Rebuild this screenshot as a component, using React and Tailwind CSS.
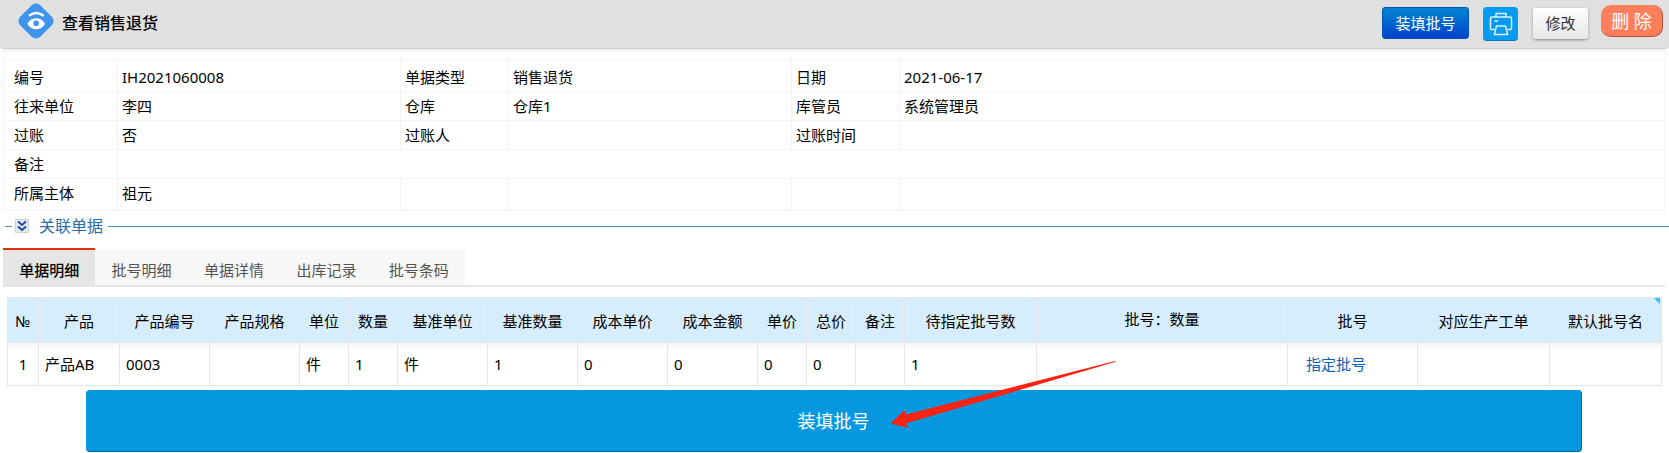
import { useState } from "react";

const INFO_ROWS = [
  ["编号", "IH2021060008", "单据类型", "销售退货", "日期", "2021-06-17"],
  ["往来单位", "李四", "仓库", "仓库1", "库管员", "系统管理员"],
  ["过账", "否", "过账人", "", "过账时间", ""],
  ["备注", ""],
  ["所属主体", "祖元", "", "", "", ""],
];

const TABS = ["单据明细", "批号明细", "单据详情", "出库记录", "批号条码"];

const COLUMNS = [
  { title: "№", width: "w-[31px]", value: "1", center: true },
  { title: "产品", width: "w-[81px]", value: "产品AB" },
  { title: "产品编号", width: "w-[90px]", value: "0003" },
  { title: "产品规格", width: "w-[90px]", value: "" },
  { title: "单位", width: "w-[49px]", value: "件" },
  { title: "数量", width: "w-[49px]", value: "1" },
  { title: "基准单位", width: "w-[90px]", value: "件" },
  { title: "基准数量", width: "w-[90px]", value: "1" },
  { title: "成本单价", width: "w-[90px]", value: "0" },
  { title: "成本金额", width: "w-[90px]", value: "0" },
  { title: "单价", width: "w-[49px]", value: "0" },
  { title: "总价", width: "w-[49px]", value: "0" },
  { title: "备注", width: "w-[49px]", value: "" },
  { title: "待指定批号数", width: "w-[132px]", value: "1" },
  { title: "批号：数量", width: "w-[251px]", value: "", raised: true },
  { title: "批号", width: "w-[130px]", value: "指定批号", link: true },
  { title: "对应生产工单", width: "w-[132px]", value: "" },
  { title: "默认批号名", width: "w-[112px]", value: "", corner: true },
];

function ViewIcon() {
  return (
    <svg width="36" height="36" viewBox="0 0 36 36" fill="none" className="shrink-0">
      <rect x="3.800" y="3.800" width="28.400" height="28.400" rx="6" fill="#3f94ee" transform="rotate(45 18 18)" />
      <path d="M11.800 12.300c4-2.800 9-2.800 13 0" stroke="#fff" strokeWidth="2.400" strokeLinecap="round" />
      <path d="M9.300 20.800c2.200-3.800 5.200-5.500 8.900-5.500s6.700 1.700 8.900 5.500c-2.200 3.700-5.200 5.500-8.900 5.500s-6.700-1.800-8.900-5.500z" fill="#fff" />
      <circle cx="18.200" cy="20.300" r="2.800" fill="#3f94ee" />
    </svg>
  );
}

function PrinterIcon() {
  return (
    <svg width="24" height="24" viewBox="0 0 24 24" fill="none" stroke="#e0f3ff" strokeWidth="1.500" strokeLinejoin="round">
      <path d="M7 5V1.500h10V5" />
      <path d="M5.500 17.500H2.800q-1.300 0-1.300-1.300V6.300Q1.500 5 2.800 5h18.400q1.300 0 1.300 1.300v9.900q0 1.300-1.300 1.300h-2.700" />
      <path d="M7.500 14h9l2.200 8.500H5.300z" />
      <path d="M5.500 9h3.500" />
    </svg>
  );
}

function ExpandIcon() {
  return (
    <svg width="14" height="14" viewBox="0 0 14 14" fill="none">
      <rect width="14" height="14" rx="1" fill="#cfcfcf" />
      <rect x="1" y="1" width="12" height="12" fill="#e9e9e9" />
      <path d="M3 2.500l4 3.500 4-3.500M3 7.500l4 3.500 4-3.500" stroke="#1a48b0" strokeWidth="2" />
    </svg>
  );
}

function InfoTable() {
  return (
    <table className="w-full table-fixed border-collapse border border-[#ececec]">
      <colgroup>
        <col className="w-[114px]" />
        <col className="w-[283px]" />
        <col className="w-[108px]" />
        <col className="w-[283px]" />
        <col className="w-[108px]" />
        <col />
      </colgroup>
      <tbody>
        {INFO_ROWS.map((row, r) => (
          <tr key={r} className="h-[29px] first:h-8 last:h-8 first:align-bottom last:align-top">
            {row.map((text, c) => {
              const Cell = c % 2 === 0 && text ? "th" : "td";
              return (
                <Cell
                  key={c}
                  colSpan={row.length === 2 && c === 1 ? 5 : 1}
                  className="border border-[#f3f3f3] py-1 pl-1 text-left font-normal leading-5 first:pl-[10px]"
                >
                  {text}
                </Cell>
              );
            })}
          </tr>
        ))}
      </tbody>
    </table>
  );
}

function DetailTable() {
  return (
    <table className="w-full table-fixed border-collapse">
      <colgroup>
        {COLUMNS.map((col) => (
          <col key={col.title} className={col.width} />
        ))}
      </colgroup>
      <thead>
        <tr className="h-[45px] bg-[#d6edfd]">
          {COLUMNS.map((col) => (
            <th key={col.title} className="relative border border-[#e6e6e6] p-0 pt-[2px] font-normal leading-5">
              <span className={col.raised ? "block pb-1" : "block"}>{col.title}</span>
              {col.corner && (
                <svg width="6" height="6" className="absolute right-px top-0">
                  <path d="M0 0h6v6z" fill="#2fc4f5" />
                </svg>
              )}
            </th>
          ))}
        </tr>
      </thead>
      <tbody>
        <tr className="h-[43px] bg-linear-to-b from-[#f5f5f5] to-white to-15%">
          {COLUMNS.map((col) => (
            <td
              key={col.title}
              className={`border border-[#e6e6e6] leading-5 ${col.center ? "text-center" : col.link ? "pl-[18px]" : "pl-[6px]"}`}
            >
              {col.link ? (
                <a href="#batch" className="text-[#0a62b8]">{col.value}</a>
              ) : (
                col.value
              )}
            </td>
          ))}
        </tr>
      </tbody>
    </table>
  );
}

export default function App() {
  const [tab, setTab] = useState(0);

  return (
    <div className="bg-white font-['Noto_Sans','Noto_Sans_CJK_SC',sans-serif] text-[15px] text-black">
      {/* 标题栏 */}
      <header className="flex h-[49px] items-start rounded-b border-b border-[#d0d0d0] bg-[#e0e0e0] pl-[18px] pr-[6px] shadow-md shadow-black/5">
        <div className="flex items-center gap-2 pt-[3px]">
          <ViewIcon />
          <h1 className="pt-1 text-base font-medium leading-6">查看销售退货</h1>
        </div>
        <div className="ml-auto flex items-start">
          <button className="mt-[7px] h-8 w-[87px] rounded-[3px] border border-[#0357b4] bg-linear-to-b from-[#0484d0] to-[#0040cc] text-white">
            装填批号
          </button>
          <button
            aria-label="打印"
            className="ml-[14px] mt-[7px] flex h-[34px] w-[35px] items-center justify-center rounded border-b border-[#0878bb] bg-[#049bf0]"
          >
            <PrinterIcon />
          </button>
          <button className="ml-[15px] mt-2 h-[31px] w-[55px] rounded-[3px] bg-linear-to-b from-white to-[#e6e6e6] text-[#333] shadow-sm shadow-black/30">
            修改
          </button>
          <button className="ml-[13px] mt-[5px] h-8 w-[62px] rounded-[10px] border-b border-r border-[#b0533d] bg-[#ff7f5c] text-lg leading-none text-white">
            删 除
          </button>
        </div>
      </header>

      <main className="ml-[3px] mr-1 pt-[10px]">
        <InfoTable />

        {/* 关联单据 */}
        <div className="-mr-1 ml-[2px] mt-[3px] flex h-6 items-center text-base text-[#2c6ca6]">
          <span className="h-px w-[7px] bg-[#4a98c9]" />
          <button aria-expanded="false" className="ml-[3px] flex items-center gap-[10px] leading-6">
            <ExpandIcon />
            关联单据
          </button>
          <span className="ml-[5px] h-px flex-1 bg-[#4a98c9]" />
        </div>

        {/* 标签页 */}
        <div className="mt-[10px] border-b-2 border-[#e5e5e5]">
          <div role="tablist" className="grid w-[462px] grid-cols-5">
            {TABS.map((name, i) => (
              <button
                key={name}
                role="tab"
                aria-selected={tab === i}
                onClick={() => setTab(i)}
                className={
                  tab === i
                    ? "h-[37px] border-t-2 border-[#e03100] bg-[#e5e5e5] pt-[6px] font-medium text-black"
                    : "mt-[2px] h-[35px] bg-[#f7f7f7] pt-[6px] text-[#555]"
                }
              >
                {name}
              </button>
            ))}
          </div>
        </div>

        <div className="ml-1 mr-[3px] mt-[10px]">
          <DetailTable />
        </div>

        <div className="relative mt-1">
          <button className="mx-auto block h-[62px] w-[90%] rounded border-b border-r border-[#0368a3] bg-[#0598e0] text-lg text-white">
            装填批号
          </button>
          <svg
            width="228"
            height="72"
            viewBox="0 0 228 72"
            className="pointer-events-none absolute -top-8 left-1/2 ml-14"
          >
            <path d="M0.500 65.500L14.500 52l1 4.500L225 3q1 .500 0 1L15.500 65.500l3.500 4.500z" fill="#ff2211" />
          </svg>
        </div>
      </main>
    </div>
  );
}
